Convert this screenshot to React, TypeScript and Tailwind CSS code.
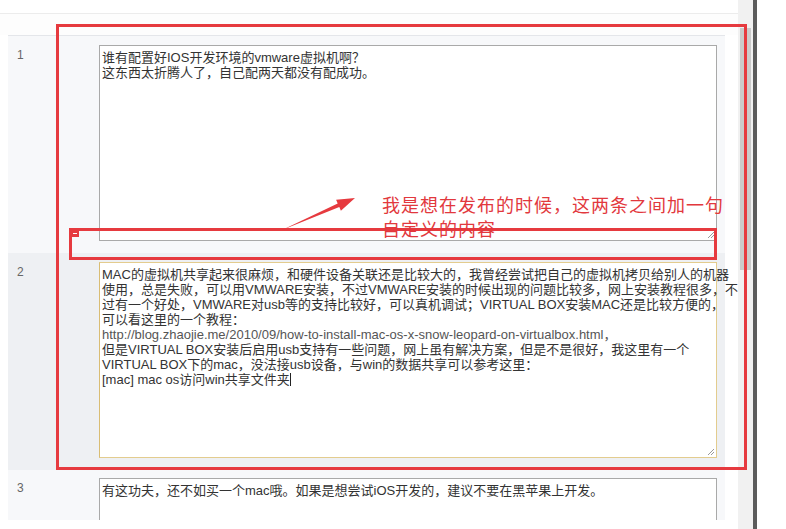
const FONT = "font-['Liberation_Sans','Noto_Sans_CJK_SC',sans-serif]";

const rows = [
  {
    n: "1",
    bg: "bg-[#f7f8fa]",
    focus: false,
    h: "h-[196px]",
    lines: [
      "谁有配置好IOS开发环境的vmware虚拟机啊？",
      "这东西太折腾人了，自己配两天都没有配成功。",
    ],
  },
  {
    n: "2",
    bg: "bg-[#eef0f3]",
    focus: true,
    h: "h-[196px]",
    lines: [
      "MAC的虚拟机共享起来很麻烦，和硬件设备关联还是比较大的，我曾经尝试把自己的虚拟机拷贝给别人的机器",
      "使用，总是失败，可以用VMWARE安装，不过VMWARE安装的时候出现的问题比较多，网上安装教程很多，不",
      "过有一个好处，VMWARE对usb等的支持比较好，可以真机调试；VIRTUAL BOX安装MAC还是比较方便的，",
      "可以看这里的一个教程：",
      "http://blog.zhaojie.me/2010/09/how-to-install-mac-os-x-snow-leopard-on-virtualbox.html，",
      "但是VIRTUAL BOX安装后启用usb支持有一些问题，网上虽有解决方案，但是不是很好，我这里有一个",
      "VIRTUAL BOX下的mac，没法接usb设备，与win的数据共享可以参考这里：",
      "[mac] mac os访问win共享文件夹",
    ],
  },
  {
    n: "3",
    bg: "bg-[#f7f8fa]",
    focus: false,
    h: "h-[60px]",
    lines: ["有这功夫，还不如买一个mac哦。如果是想尝试iOS开发的，建议不要在黑苹果上开发。"],
  },
];

function Grip() {
  return (
    <svg className="absolute right-[1px] bottom-[1px]" width="9" height="9" viewBox="0 0 9 9">
      <path d="M8 2 L2 8 M8 5 L5 8" stroke="#9a9a9a" strokeWidth="1" />
    </svg>
  );
}

function Row({ row, last }: { row: (typeof rows)[number]; last: boolean }) {
  return (
    <div className={`flex ${row.bg} ${last ? "pt-[8px] h-[50px] overflow-hidden items-start" : "pt-[9px] pb-[12px]"}`}>
      <div className="w-[91px] shrink-0 pl-[9px] pt-[3px] text-[12px] leading-[15px] text-[#666]">{row.n}</div>
      <div
        className={`relative w-[618px] ${row.h} shrink-0 bg-white px-[2px] pt-[4px] text-[13px] leading-[15px] text-[#333] whitespace-nowrap ${
          row.focus ? "border border-[#e3cc8e] border-l-[#d9bd74]" : "border border-[#a9a9a9]"
        }`}
      >
        {row.lines.map((l, i) => (
          <div key={i} className={l.startsWith("http") ? "text-[#555]" : ""}>
            {l}
            {row.focus && i === row.lines.length - 1 && (
              <span className="inline-block w-px h-[13px] bg-[#222] align-[-2px]" />
            )}
          </div>
        ))}
        {!last && <Grip />}
      </div>
    </div>
  );
}

export default function App() {
  return (
    <div className={`relative w-[786px] h-[529px] overflow-hidden bg-white flex ${FONT}`}>
      {/* main list */}
      <div className="w-[738px] shrink-0 flex flex-col">
        <div className="h-[14px] border-b border-[#ececec]" />
        <div className="h-[21px] bg-[#fdfdfd]" />
        <div className="ml-[8px] w-[717px] border-t border-[#e4e6ea]">
          {rows.map((r, i) => (
            <Row key={r.n} row={r} last={i === rows.length - 1} />
          ))}
        </div>
      </div>

      {/* scrollbar */}
      <div className="w-[15px] shrink-0 flex flex-col pt-[13px] bg-[#f1f1f1]">
        <div className="h-[15px]" />
        <div className="mx-[2px] h-[242px] bg-[#cbcbcb]" />
      </div>
      <div className="w-[4px] shrink-0 bg-[#5c5c5c]" />
      <div className="flex-1 bg-white" />

      {/* annotations */}
      <div className="absolute left-[56px] top-[24px] w-[691px] h-[446px] border-[3px] border-[#e63a3f]" />
      <div className="absolute left-[69px] top-[228px] w-[648px] h-[32px] border-[3px] border-[#e63a3f]" />
      <div className="absolute left-[71px] top-[229px] w-[8px] h-[8px] bg-[#e63a3f] flex items-center justify-center">
        <div className="w-[4px] h-[1px] bg-white" />
      </div>
      <svg className="absolute left-0 top-0" width="786" height="529" viewBox="0 0 786 529">
        <polygon
          points="282,230 339.3,207 340.9,210.7 355,198 336.1,199.7 337.7,203.4"
          fill="#e63a3f"
        />
      </svg>
      <div className="absolute left-[382px] top-[192px] text-[18px] leading-[24px] tracking-[1px] text-[#e2383d] font-['Noto_Sans_CJK_SC',sans-serif] whitespace-nowrap">
        <div>我是想在发布的时候，这两条之间加一句</div>
        <div>自定义的内容</div>
      </div>
    </div>
  );
}
